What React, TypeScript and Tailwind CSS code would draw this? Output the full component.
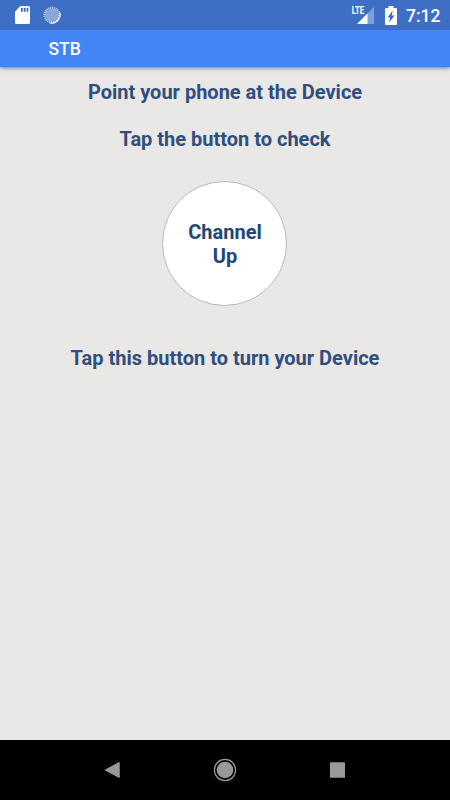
function SdCard() {
  return (
    <svg className="ml-[15px] h-[18px] w-[15px]" viewBox="0 0 15 18">
      <path d="M5.4 0H13.5Q15 0 15 1.5V16.5Q15 18 13.5 18H1.5Q0 18 0 16.5V5.8Z" fill="#fff" />
      <path d="M6 2h1.7v3.8H6zM8.8 2h1.7v3.8H8.8zM11.6 2h1.7v3.8h-1.7z" fill="#2c66c8" />
    </svg>
  );
}

function Spinner() {
  return (
    <svg className="ml-[13px] h-[18px] w-[18px]" viewBox="0 0 18 18">
      <circle cx="9" cy="9" r="6.5" fill="#8ba8dd" />
      <circle cx="9" cy="9" r="7.3" fill="none" stroke="#c3d2ed" strokeWidth="2.2" strokeDasharray="1.1 0.8" />
      <path d="M16.8 6.2A8.2 8.2 0 0 1 6.8 17A9.4 9.4 0 0 0 16.8 6.2Z" fill="#fff" stroke="#fff" strokeWidth=".5" />
    </svg>
  );
}

function Signal() {
  return (
    <svg className="h-[20px] w-[24px]" viewBox="0 0 24 20">
      <path d="M23 2V19H6Z" fill="#7c9ed9" />
      <path d="M16.5 8.5V19H6Z" fill="#fff" />
      <text x="0.8" y="9" fill="#fff" fontSize="11" fontWeight="700" textLength="12.4" lengthAdjust="spacingAndGlyphs" className="font-['Roboto',sans-serif]">LTE</text>
    </svg>
  );
}

function Battery() {
  return (
    <svg className="ml-[10px] h-[19px] w-[12px]" viewBox="0 0 12 19">
      <path d="M3.5 0h5v2H11q1 0 1 1v15q0 1-1 1H1q-1 0-1-1V3q0-1 1-1h2.5Z" fill="#fff" />
      <path d="M7.6 4.6L2.7 11.4H5.2L4.2 16.5L9.5 9.5H6.7Z" fill="#2c66c8" />
    </svg>
  );
}

export default function App() {
  return (
    <div className="flex h-[800px] w-[450px] flex-col overflow-hidden bg-[#e9e8e6] font-['Roboto',sans-serif]">
      <div className="z-20 flex h-[30px] shrink-0 items-center bg-[#3f6fc4]">
        <SdCard />
        <Spinner />
        <div className="ml-auto flex items-center pr-[9px]">
          <Signal />
          <Battery />
          <span className="ml-[9px] w-[35px] whitespace-nowrap pt-px text-[17.5px] font-medium leading-[30px] text-white">7:12</span>
        </div>
      </div>
      <header className="z-10 flex h-[37px] shrink-0 items-center bg-[#4285f5] pl-[48.5px] shadow-[0_1px_4px_rgba(0,0,0,0.5)]">
        <h1 className="pt-px text-[17.5px] font-medium leading-[20px] text-white">STB</h1>
      </header>
      <main className="flex flex-1 flex-col items-center text-[20px] font-bold leading-[24px] text-[#304f7d]">
        <p className="mt-[13px] whitespace-nowrap">Point your phone at the Device</p>
        <p className="mt-[23px] whitespace-nowrap">Tap the button to check</p>
        <button className="mt-[30px] mr-px flex h-[125px] w-[125px] flex-col items-center justify-center rounded-full border border-[#b9b9b9] bg-white pl-px text-[#244675]">
          <span>Channel</span>
          <span>Up</span>
        </button>
        <p className="mt-[40px] whitespace-nowrap">Tap this button to turn your Device</p>
      </main>
      <nav className="grid h-[60px] shrink-0 grid-cols-3 items-center bg-black px-[56px]">
        <svg className="h-[24px] w-[24px] justify-self-center" viewBox="0 0 24 24">
          <path d="M5.2 12L19.2 4.5V19.5Z" fill="#999" stroke="#999" strokeWidth="1" strokeLinejoin="round" />
        </svg>
        <svg className="h-[24px] w-[24px] justify-self-center" viewBox="0 0 24 24">
          <circle cx="12" cy="12" r="10.6" fill="none" stroke="#999" strokeWidth="1.2" />
          <circle cx="12" cy="12" r="8.3" fill="#999" />
        </svg>
        <svg className="h-[24px] w-[24px] justify-self-center" viewBox="0 0 24 24">
          <rect x="4" y="4.3" width="15" height="15.5" rx=".5" fill="#999" />
        </svg>
      </nav>
    </div>
  );
}
